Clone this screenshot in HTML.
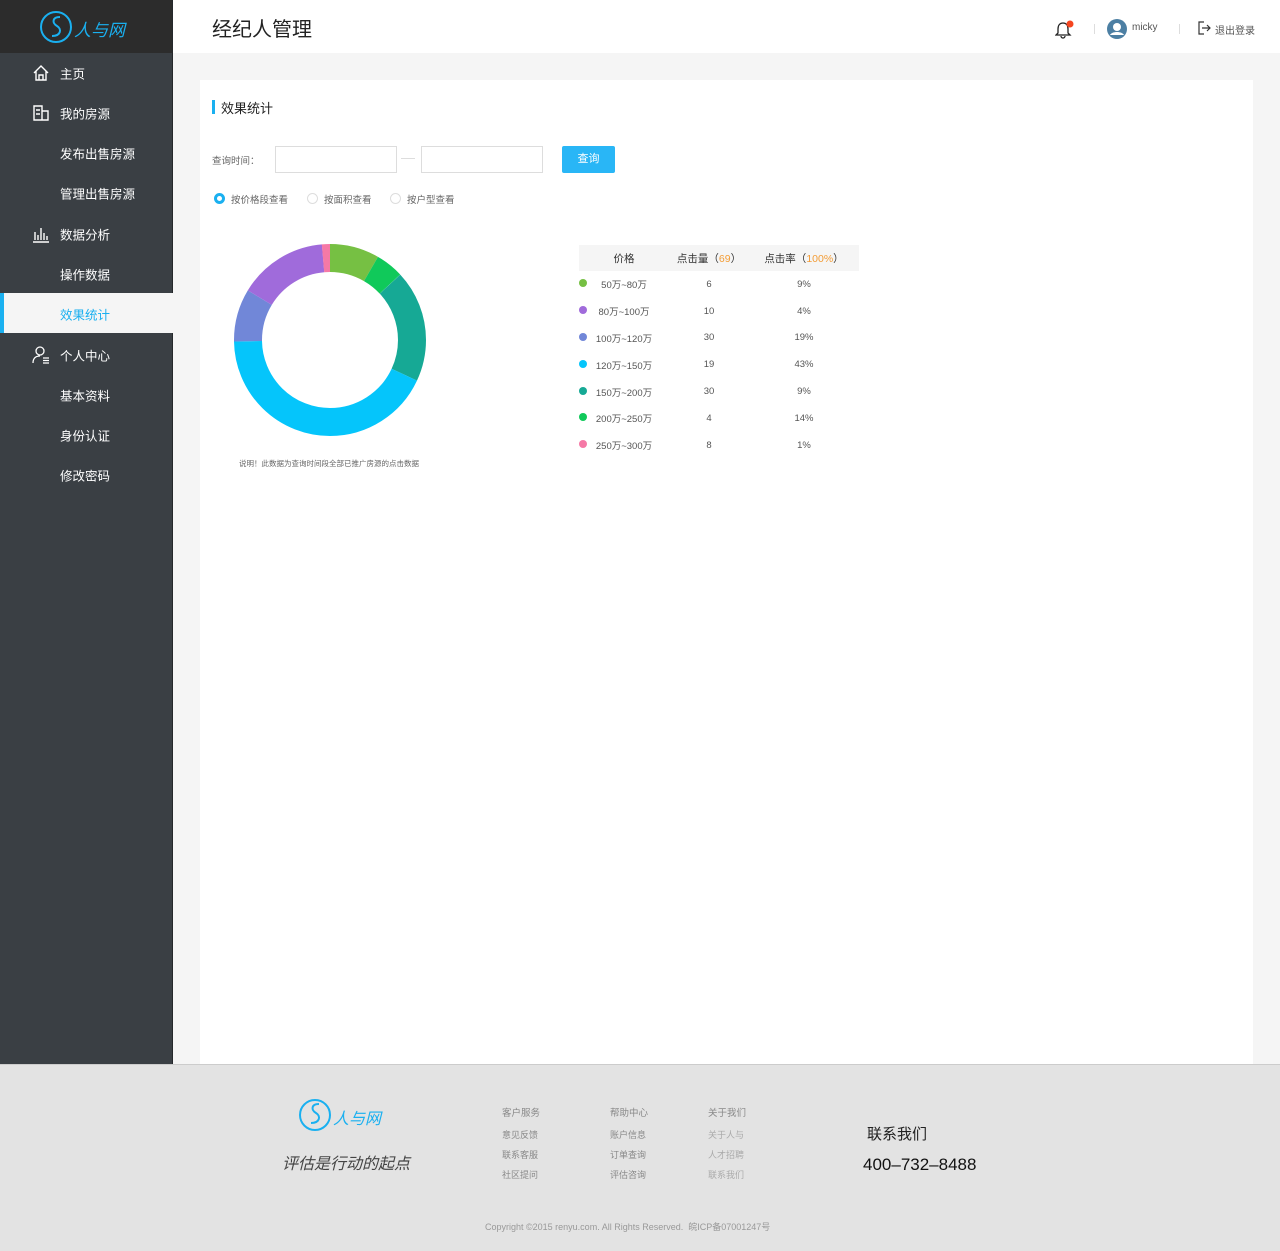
<!DOCTYPE html>
<html><head><meta charset="utf-8"><style>
*{margin:0;padding:0;box-sizing:border-box}
body{width:1280px;height:1251px;position:relative;background:#f5f5f5;font-family:"Liberation Sans","Noto Sans CJK SC",sans-serif;overflow:hidden}
.side{position:absolute;left:0;top:0;width:173px;height:1064px;background:#3a3f44;border-right:1px solid #25282b}
.logo{height:53px;background:#2c2c2c;position:relative}
.nav{position:absolute;left:60px;color:#fff;font-size:12.5px;transform:translateY(-50%)}
.ico{position:absolute;left:32px;transform:translateY(-50%)}
.active{position:absolute;left:0;top:293px;width:173px;height:40px;background:#f5f5f5;border-left:4px solid #1ab0f0}
.top{position:absolute;left:173px;top:0;width:1107px;height:53px;background:#fff}
.card{position:absolute;left:200px;top:80px;width:1053px;height:984px;background:#fff}
.footer{position:absolute;left:0;top:1064px;width:1280px;height:187px;background:#e3e3e3;border-top:1px solid #ccc}
.t{position:absolute;white-space:nowrap}
.inp{position:absolute;top:66px;width:122px;height:27px;border:1px solid #ddd;background:#fff}
.radio{position:absolute;width:11px;height:11px;border:1px solid #ddd;border-radius:50%}
table{position:absolute;left:579px;top:245px;border-collapse:collapse;font-size:9.5px;color:#555}
td,th{text-align:center;height:26.8px}
th{background:#f5f5f5;font-weight:normal;color:#333;font-size:10.5px;height:26px}
.dot{display:inline-block;width:8px;height:8px;border-radius:50%;position:absolute;left:0;margin-top:2px}
.fl{color:#888;font-size:12px}
.fs{color:#888;font-size:9px}
</style></head><body>
<div class="side">
 <div class="logo">
  <svg width="173" height="53" style="position:absolute;left:0;top:0">
   <circle cx="56" cy="27" r="15" fill="none" stroke="#1ab0f0" stroke-width="2"/>
   <path d="M60 17c-8 0-8 6-3 9s4 10-5 10" fill="none" stroke="#1ab0f0" stroke-width="2"/>
   <text x="74" y="36" fill="#1ab0f0" font-size="17" font-style="italic" font-family="Noto Sans CJK SC">人与网</text>
  </svg>
 </div>
 <div class="active"></div>
 <svg class="ico" style="top:73px" width="18" height="18"><path d="M2 9L9 2l7 7M4 7v9h10V7M7 16v-5h4v5" fill="none" stroke="#fff" stroke-width="1.4"/></svg>
 <div class="nav" style="top:73px">主页</div>
 <svg class="ico" style="top:113px" width="18" height="18"><path d="M2 2h8v14H2zM10 7h6v9h-6M4 6h4M4 10h4" fill="none" stroke="#fff" stroke-width="1.4"/></svg>
 <div class="nav" style="top:113px">我的房源</div>
 <div class="nav" style="top:153px">发布出售房源</div>
 <div class="nav" style="top:193px">管理出售房源</div>
 <svg class="ico" style="top:234px" width="18" height="18"><path d="M1 17h16M3 15V7M6 15V10M9 15V3M12 15V8M15 15V11" fill="none" stroke="#fff" stroke-width="1.4"/></svg>
 <div class="nav" style="top:234px">数据分析</div>
 <div class="nav" style="top:274px">操作数据</div>
 <div class="nav" style="top:314px;color:#1ab0f0">效果统计</div>
 <svg class="ico" style="top:355px" width="18" height="18"><circle cx="8" cy="5" r="4" fill="none" stroke="#fff" stroke-width="1.3"/><path d="M1 17c0-5 3-7 7-7M11 12h6M11 14.5h6M11 17h6" fill="none" stroke="#fff" stroke-width="1.3"/></svg>
 <div class="nav" style="top:355px">个人中心</div>
 <div class="nav" style="top:395px">基本资料</div>
 <div class="nav" style="top:435px">身份认证</div>
 <div class="nav" style="top:475px">修改密码</div>
</div>
<div class="top">
 <div class="t" style="left:39px;top:13px;font-size:20px;color:#222">经纪人管理</div>
 <svg class="t" style="left:882px;top:20px" width="20" height="20"><path d="M8 3c-3 0-5 2-5 6v4l-2 2h14l-2-2V9c0-4-2-6-5-6zM6 16a2 2 0 004 0" fill="none" stroke="#222" stroke-width="1.3"/><circle cx="15" cy="4" r="3.5" fill="#f5451f"/></svg>
 <div class="t" style="left:921px;top:24px;width:1px;height:10px;background:#ddd"></div>
 <svg class="t" style="left:934px;top:19px" width="20" height="20"><circle cx="10" cy="10" r="10" fill="#4c7fa3"/><circle cx="10" cy="8" r="4" fill="#fff"/><path d="M3 16c2-4 12-4 14 0" fill="#fff"/></svg>
 <div class="t" style="left:959px;top:22px;font-size:10px;color:#555">micky</div>
 <div class="t" style="left:1006px;top:24px;width:1px;height:10px;background:#ddd"></div>
 <svg class="t" style="left:1024px;top:21px" width="14" height="14"><path d="M7 1H2v12h5M5 7h8M10 4l3 3-3 3" fill="none" stroke="#333" stroke-width="1.2"/></svg>
 <div class="t" style="left:1042px;top:22px;font-size:10px;color:#555">退出登录</div>
</div>
<div class="card">
 <div class="t" style="left:12px;top:20px;width:3px;height:14px;background:#1ab0f0"></div>
 <div class="t" style="left:21px;top:18px;font-size:13px;color:#222">效果统计</div>
 <div class="t" style="left:12px;top:73px;font-size:9.5px;color:#666">查询时间：</div>
 <div class="inp" style="left:75px;"></div>
 <div class="t" style="left:201px;top:78px;width:14px;height:1px;background:#ddd"></div>
 <div class="inp" style="left:221px;"></div>
 <div class="t" style="left:362px;top:66px;width:53px;height:27px;background:#29b6f6;border-radius:2px;color:#fff;font-size:11px;text-align:center;line-height:27px">查询</div>
 <div class="radio" style="left:14px;top:113px;border:3px solid #1ab0f0"></div>
 <div class="t" style="left:31px;top:112px;font-size:9.5px;color:#666">按价格段查看</div>
 <div class="radio" style="left:107px;top:113px"></div>
 <div class="t" style="left:124px;top:112px;font-size:9.5px;color:#666">按面积查看</div>
 <div class="radio" style="left:190px;top:113px"></div>
 <div class="t" style="left:207px;top:112px;font-size:9.5px;color:#666">按户型查看</div>
 <div class="t" style="left:39px;top:378px;font-size:7.5px;color:#666">说明！此数据为查询时间段全部已推广房源的点击数据</div>
</div>
<svg style="position:absolute;left:230px;top:240px" width="200" height="200">
 <g transform="rotate(-90 100 100)" fill="none" stroke-width="28">
  <circle cx="100" cy="100" r="82" stroke="#76c043" stroke-dasharray="42.9 600" stroke-dashoffset="0"/>
  <circle cx="100" cy="100" r="82" stroke="#10c95a" stroke-dasharray="24.3 600" stroke-dashoffset="-42.9"/>
  <circle cx="100" cy="100" r="82" stroke="#16a995" stroke-dasharray="97.3 600" stroke-dashoffset="-67.3"/>
  <circle cx="100" cy="100" r="82" stroke="#05c5fb" stroke-dasharray="220.4 600" stroke-dashoffset="-164.6"/>
  <circle cx="100" cy="100" r="82" stroke="#7187d8" stroke-dasharray="45.8 600" stroke-dashoffset="-385"/>
  <circle cx="100" cy="100" r="82" stroke="#a06bdb" stroke-dasharray="77.3 600" stroke-dashoffset="-430.8"/>
  <circle cx="100" cy="100" r="82" stroke="#f579a6" stroke-dasharray="7.2 600" stroke-dashoffset="-508"/>
 </g>
</svg>
<table>
 <tr><th style="width:90px">价格</th><th style="width:80px">点击量（<span style="color:#f39c35">69</span>）</th><th style="width:110px">点击率（<span style="color:#f39c35">100%</span>）</th></tr>
 <tr><td style="position:relative"><span class="dot" style="background:#76c043"></span>50万~80万</td><td>6</td><td>9%</td></tr>
 <tr><td style="position:relative"><span class="dot" style="background:#a06bdb"></span>80万~100万</td><td>10</td><td>4%</td></tr>
 <tr><td style="position:relative"><span class="dot" style="background:#7187d8"></span>100万~120万</td><td>30</td><td>19%</td></tr>
 <tr><td style="position:relative"><span class="dot" style="background:#05c5fb"></span>120万~150万</td><td>19</td><td>43%</td></tr>
 <tr><td style="position:relative"><span class="dot" style="background:#16a995"></span>150万~200万</td><td>30</td><td>9%</td></tr>
 <tr><td style="position:relative"><span class="dot" style="background:#10c95a"></span>200万~250万</td><td>4</td><td>14%</td></tr>
 <tr><td style="position:relative"><span class="dot" style="background:#f579a6"></span>250万~300万</td><td>8</td><td>1%</td></tr>
</table>
<div class="footer">
 <svg class="t" style="left:295px;top:30px" width="110" height="40">
  <circle cx="20" cy="20" r="15" fill="none" stroke="#1ab0f0" stroke-width="2"/>
  <path d="M24 9c-8 0-8 6-3 9s4 10-5 10" fill="none" stroke="#1ab0f0" stroke-width="2"/>
  <text x="38" y="29" fill="#1ab0f0" font-size="16" font-style="italic" font-family="Noto Sans CJK SC">人与网</text>
 </svg>
 <div class="t" style="left:282px;top:85px;font-size:16px;color:#444;font-style:italic">评估是行动的起点</div>
 <div class="t fl" style="left:502px;top:40px;font-size:9.5px">客户服务</div>
 <div class="t fs" style="left:502px;top:63px">意见反馈</div>
 <div class="t fs" style="left:502px;top:83px">联系客服</div>
 <div class="t fs" style="left:502px;top:103px">社区提问</div>
 <div class="t fl" style="left:610px;top:40px;font-size:9.5px">帮助中心</div>
 <div class="t fs" style="left:610px;top:63px">账户信息</div>
 <div class="t fs" style="left:610px;top:83px">订单查询</div>
 <div class="t fs" style="left:610px;top:103px">评估咨询</div>
 <div class="t fl" style="left:708px;top:40px;font-size:9.5px">关于我们</div>
 <div class="t fs" style="left:708px;top:63px;color:#aaa">关于人与</div>
 <div class="t fs" style="left:708px;top:83px;color:#aaa">人才招聘</div>
 <div class="t fs" style="left:708px;top:103px;color:#aaa">联系我们</div>
 <div class="t" style="left:867px;top:58px;font-size:15px;color:#222">联系我们</div>
 <div class="t" style="left:863px;top:90px;font-size:17px;color:#111">400–732–8488</div>
 <div class="t" style="left:485px;top:155px;font-size:9px;color:#999">Copyright ©2015 renyu.com. All Rights Reserved.&nbsp; 皖ICP备07001247号</div>
</div>
</body></html>
